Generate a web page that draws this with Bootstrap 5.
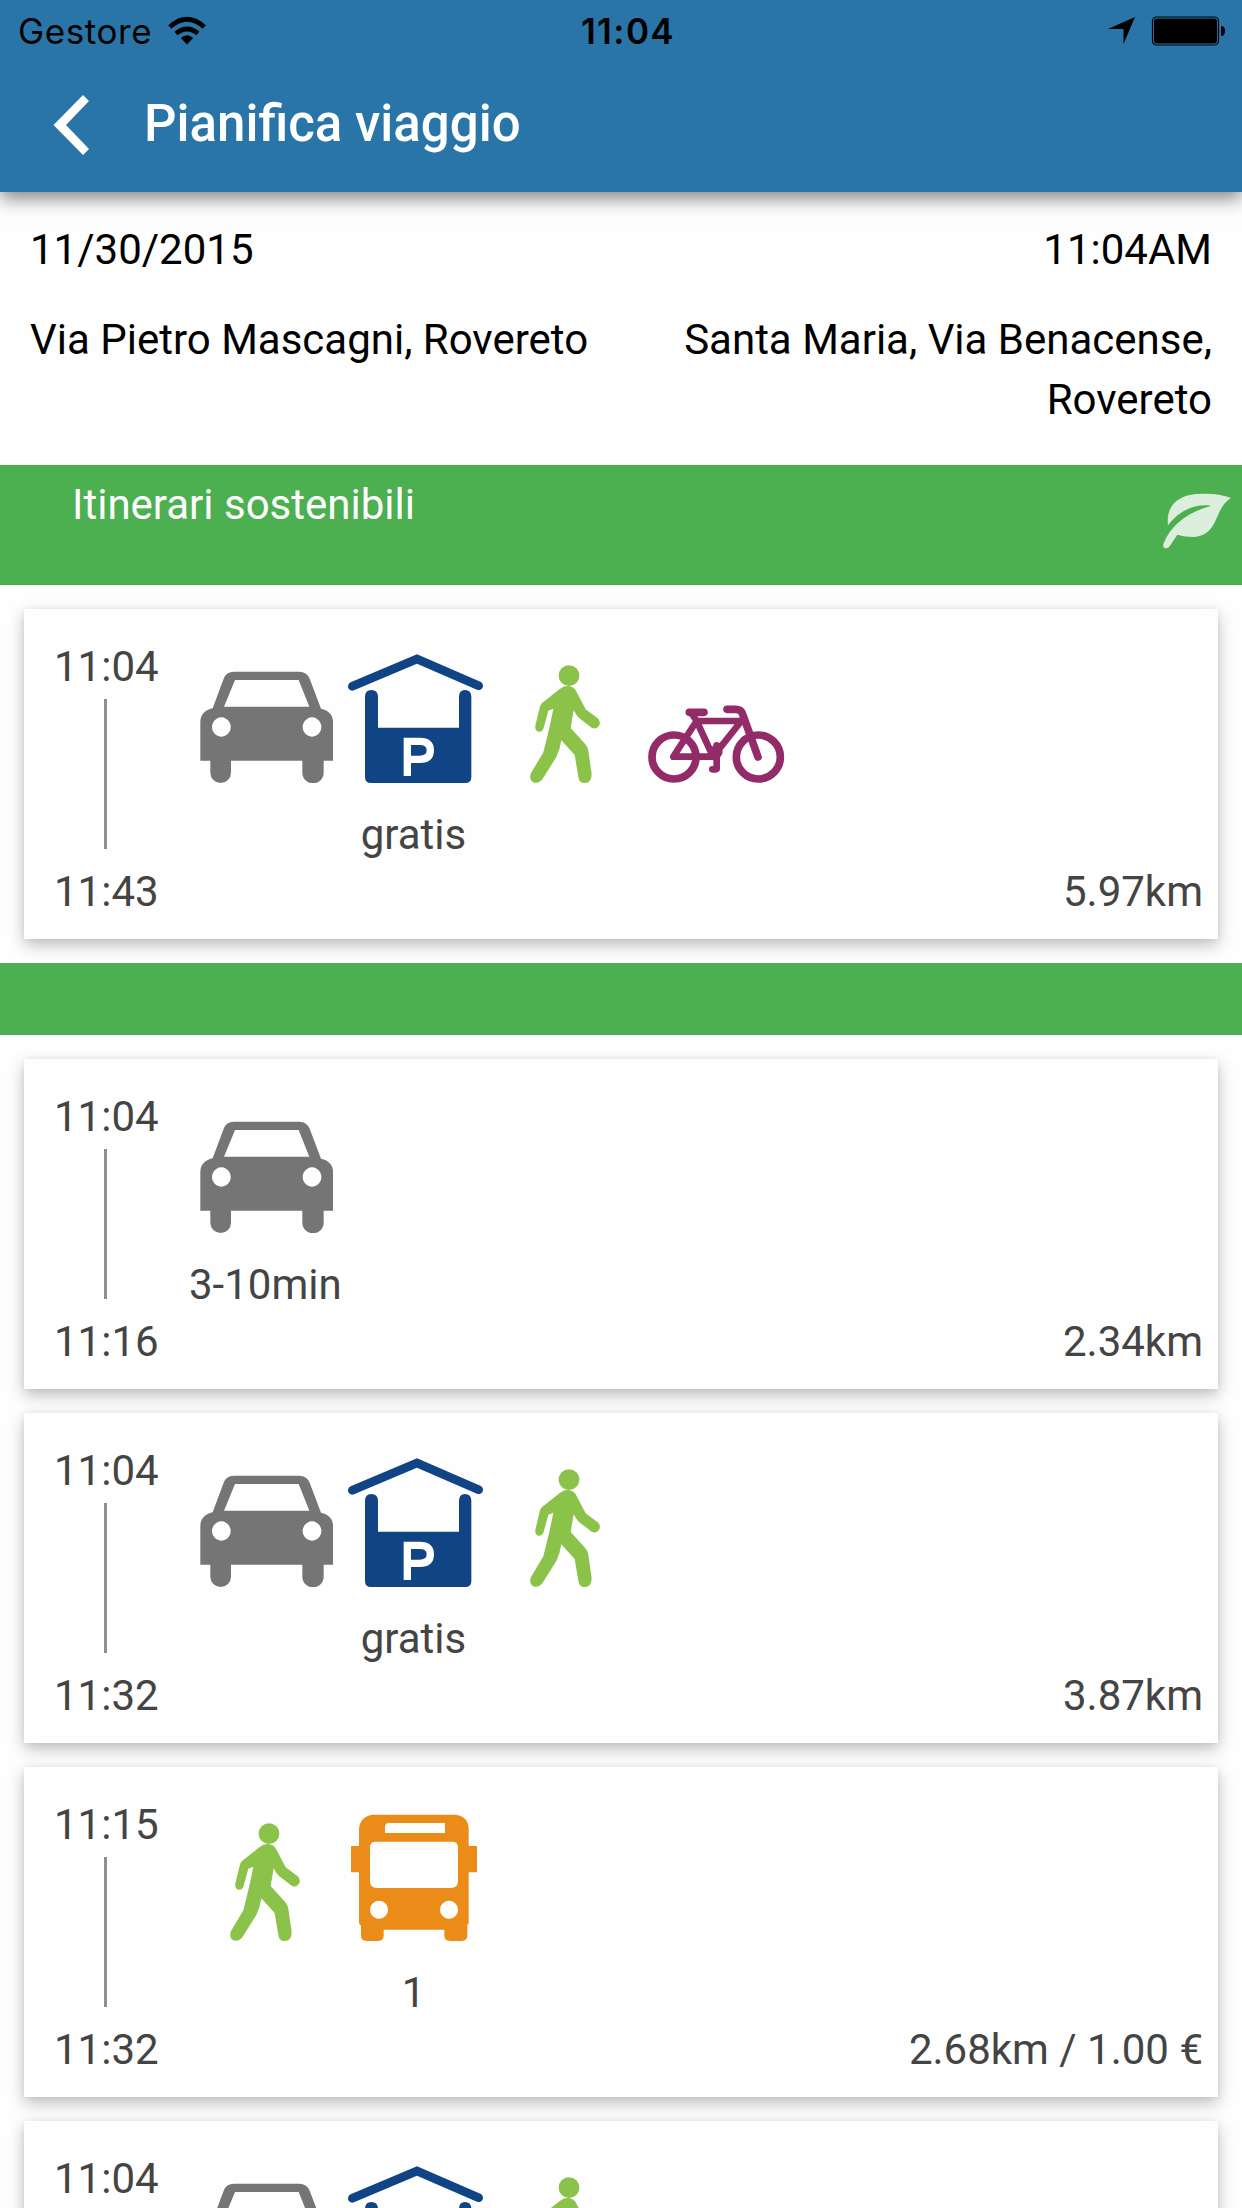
<!DOCTYPE html>
<html lang="it">
<head>
<meta charset="utf-8">
<meta name="viewport" content="width=device-width, initial-scale=1">
<title>Pianifica viaggio</title>
<link href="https://cdn.jsdelivr.net/npm/bootstrap@5.3.0/dist/css/bootstrap.min.css" rel="stylesheet">
<style>
  html, body { height: 2208px; overflow: hidden; }
  body { font-family: Roboto, sans-serif; font-size: 42px; line-height: 60px; color: #000; background: #fefefe; }
  svg { display: block; flex: none; }
  .app-view { height: 2208px; }
  .app-head { height: 192px; background: #2975a8; box-shadow: 0 6px 18px rgba(0,0,0,.5); z-index: 2; }
  .status { height: 60px; font-family: Inter, sans-serif; font-size: 35px; line-height: 60px; padding-top: 1px; }
  .status-side { flex: 1 1 0; }
  .status-start { padding-left: 18px; }
  .status-end { padding-right: 15px; }
  .status-time { font-weight: 600; letter-spacing: 1.4px; padding-left: 11px; }
  .carrier { width: 150px; letter-spacing: .6px; }
  .title-row { height: 132px; padding-left: 52px; gap: 52px; }
  .page-title { font-size: 51px; line-height: 60px; font-weight: 500; margin-top: -5px; }
  .back { margin-top: -3px; }
  .trip { height: 273px; padding: 28px 30px 0; }
  .trip-places { margin-top: 30px; }
  .trip-to { width: 560px; }
  .band { background: #4caf50; }
  .band-title { height: 120px; padding: 10px 11px 0 72px; }
  .band-empty { height: 72px; }
  .trips { padding: 24px; gap: 24px; }
  .trip-card { height: 330px; border: 0; border-radius: 0; background: #fefefe; color: #444; padding: 28px 15px 17px 30px; box-shadow: 0 6px 15px rgba(0,0,0,.26), 0 0 6px rgba(0,0,0,.05); }
  .times { width: 104px; flex: none; white-space: nowrap; }
  .time-line { width: 3px; height: 150px; background: #8f8f8f; margin: 2px 0 13px 50px; }
  .legs { padding: 14px 0 0 33px; }
  .leg { width: 150px; }
  .leg svg { width: 150px; height: 132px; }
  .leg-label { margin: 22px 3px 0 -2px; white-space: nowrap; }
  .distance { flex: 1; }
</style>
</head>
<body>
<svg width="0" height="0" class="position-absolute">
  <defs>
    <symbol id="car" viewBox="33 33 450 396">
      <path fill="#757575" fill-rule="evenodd" d="M98 205L131 116Q139 95 161 95H358Q380 95 389 116L423 206Q459 214 459 246V362H431V398A32 32 0 0 1 367 398V362H153V398A31 31 0 0 1 91 398V362H61V246Q61 214 98 205ZM165 120L132 200H388L356 120ZM124 232a28 29 0 1 0 .1 0ZM396 232a28 29 0 1 0 .1 0Z"/>
    </symbol>
    <symbol id="parking" viewBox="483 33 450 396">
      <path d="M517 139L711 57L896 137" fill="none" stroke="#114484" stroke-width="26" stroke-linecap="round"/>
      <path fill="#114484" d="M555 171Q555 150 574 150Q594 150 594 171V263H837V171Q837 150 855 150Q874 150 874 171V411Q874 429 856 429H573Q555 429 555 411Z"/>
      <path d="M682 408V304H719Q751 304 751 331T719 358H682" fill="none" stroke="#fefefe" stroke-width="22"/>
    </symbol>
    <symbol id="walk" viewBox="-27 33 450 396">
      <g fill="#8bc34a"><circle cx="207" cy="107" r="31"/>
      <path d="M203 137Q223 139 231 158L257 208L293 235Q303 244 298 256Q290 269 276 264L237 234Q228 225 221 211L212 264L255 311Q263 319 265 332L275 402Q275 429 254 429Q237 429 235 410L224 345L184 301Q180 329 169 351L129 415Q119 431 103 428Q85 421 93 399L130 337L148 264L160 206L145 212L131 263Q128 276 115 275Q104 272 106 257L119 203Q122 190 134 183L178 148Q190 138 203 137Z"/></g>
    </symbol>
    <symbol id="bike" viewBox="423 33 450 396">
      <g fill="none" stroke="#932b69" stroke-linecap="round" stroke-linejoin="round">
        <circle cx="522" cy="351" r="66" stroke-width="23"/><circle cx="775" cy="351" r="66" stroke-width="23"/>
        <path stroke-width="23" d="M568 217H612M681 208H707Q723 208 727 220L774 351"/>
        <path stroke-width="20" d="M578 225L590 243H732M590 243L639 350H520L590 243M639 350L724 243M650 316V386M637 388H648"/>
        <circle cx="648" cy="335" r="20" stroke="none" fill="#932b69"/>
      </g>
    </symbol>
    <symbol id="bus" viewBox="423 87 450 396">
      <path fill="#eb8b18" fill-rule="evenodd" d="M519 104H766Q805 108 806 148V198H831V277H806V433H802V466Q802 483 785 483H750Q733 483 733 466V449H551V466Q551 483 535 483H500Q483 483 483 466V437Q477 435 477 426V277H453V198H477V148Q480 108 519 104ZM567 129Q555 129 555 141V159H735V129ZM527 185Q510 185 510 202V304Q510 324 530 324H753Q774 324 774 304V202Q774 185 757 185ZM537 362a27 27 0 1 0 .1 0ZM747 362a27 27 0 1 0 .1 0Z"/>
    </symbol>
  </defs>
</svg>

<div class="app-view overflow-hidden">
<header class="app-head position-relative">
  <div class="status d-flex text-black">
    <div class="status-side status-start d-flex align-items-center">
      <span class="carrier">Gestore</span>
      <svg width="38" height="30" viewBox="0 0 38 30"><g fill="none" stroke="#000"><path stroke-width="4.600" d="M1.800 11Q19-4.500 36.200 11"/><path stroke-width="4.600" d="M8 17.500Q19 8.500 30 17.500"/></g><path d="M19 28.500L12.800 22Q19 16.500 25.200 22Z"/></svg>
    </div>
    <div class="status-time">11:04</div>
    <div class="status-side status-end d-flex align-items-center justify-content-end">
      <svg width="27" height="27" viewBox="0 0 27 27"><path d="M0 12L27 0L15.500 27V12Z"/></svg>
      <svg class="ms-3" width="76" height="30" viewBox="0 0 76 30"><rect x="1.500" y="1" width="66" height="28" rx="4" fill="none" stroke="#000" stroke-width="1.200"/><rect x="3" y="2.500" width="63" height="25" rx="3"/><path d="M70 10Q74 10 74 15T70 20Z"/></svg>
    </div>
  </div>
  <div class="title-row d-flex align-items-center text-white">
    <svg class="back" width="40" height="62" viewBox="0 0 40 62"><path d="M31 1L1.500 31L31 61L37 55L14 31L37 7Z" fill="#fff"/></svg>
    <h1 class="page-title mb-0">Pianifica viaggio</h1>
  </div>
</header>

<section class="trip">
  <div class="d-flex justify-content-between"><div>11/30/2015</div><div>11:04AM</div></div>
  <div class="trip-places d-flex justify-content-between"><div class="text-nowrap">Via Pietro Mascagni, Rovereto</div><div class="trip-to text-end">Santa Maria, Via Benacense, Rovereto</div></div>
</section>

<div class="band band-title d-flex justify-content-between text-white">
  <div>Itinerari sostenibili</div>
  <svg class="mt-3" width="70" height="60" viewBox="207 63 210 180"><path fill="#fff" fill-opacity=".8" d="M228 166C221 105 260 71 330 71C372 71 395 75 417 84C391 99 383 126 370 153C351 195 322 211 256 194L233 229Q227 237 217 234Q211 230 215 220C235 168 286 126 358 107C300 100 257 128 228 166Z"/></svg>
</div>
<section class="trips d-flex flex-column">
  <article class="card trip-card flex-row">
    <div class="times"><div>11:04</div><div class="time-line"></div><div>11:43</div></div>
    <div class="legs d-flex text-center">
      <div class="leg"><svg><use href="#car"/></svg></div>
      <div class="leg"><svg><use href="#parking"/></svg><div class="leg-label">gratis</div></div>
      <div class="leg"><svg><use href="#walk"/></svg></div>
      <div class="leg"><svg><use href="#bike"/></svg></div>
    </div>
    <div class="distance align-self-end text-end">5.97km</div>
  </article>
</section>
<div class="band band-empty"></div>
<section class="trips d-flex flex-column">
  <article class="card trip-card flex-row">
    <div class="times"><div>11:04</div><div class="time-line"></div><div>11:16</div></div>
    <div class="legs d-flex text-center">
      <div class="leg"><svg><use href="#car"/></svg><div class="leg-label">3-10min</div></div>
    </div>
    <div class="distance align-self-end text-end">2.34km</div>
  </article>
  <article class="card trip-card flex-row">
    <div class="times"><div>11:04</div><div class="time-line"></div><div>11:32</div></div>
    <div class="legs d-flex text-center">
      <div class="leg"><svg><use href="#car"/></svg></div>
      <div class="leg"><svg><use href="#parking"/></svg><div class="leg-label">gratis</div></div>
      <div class="leg"><svg><use href="#walk"/></svg></div>
    </div>
    <div class="distance align-self-end text-end">3.87km</div>
  </article>
  <article class="card trip-card flex-row">
    <div class="times"><div>11:15</div><div class="time-line"></div><div>11:32</div></div>
    <div class="legs d-flex text-center">
      <div class="leg"><svg><use href="#walk"/></svg></div>
      <div class="leg"><svg><use href="#bus"/></svg><div class="leg-label">1</div></div>
    </div>
    <div class="distance align-self-end text-end">2.68km / 1.00 €</div>
  </article>
  <article class="card trip-card flex-row">
    <div class="times"><div>11:04</div></div>
    <div class="legs d-flex text-center">
      <div class="leg"><svg><use href="#car"/></svg></div>
      <div class="leg"><svg><use href="#parking"/></svg></div>
      <div class="leg"><svg><use href="#walk"/></svg></div>
    </div>
  </article>
</section>
</div>
<script src="https://cdn.jsdelivr.net/npm/bootstrap@5.3.0/dist/js/bootstrap.bundle.min.js"></script>
</body>
</html>
